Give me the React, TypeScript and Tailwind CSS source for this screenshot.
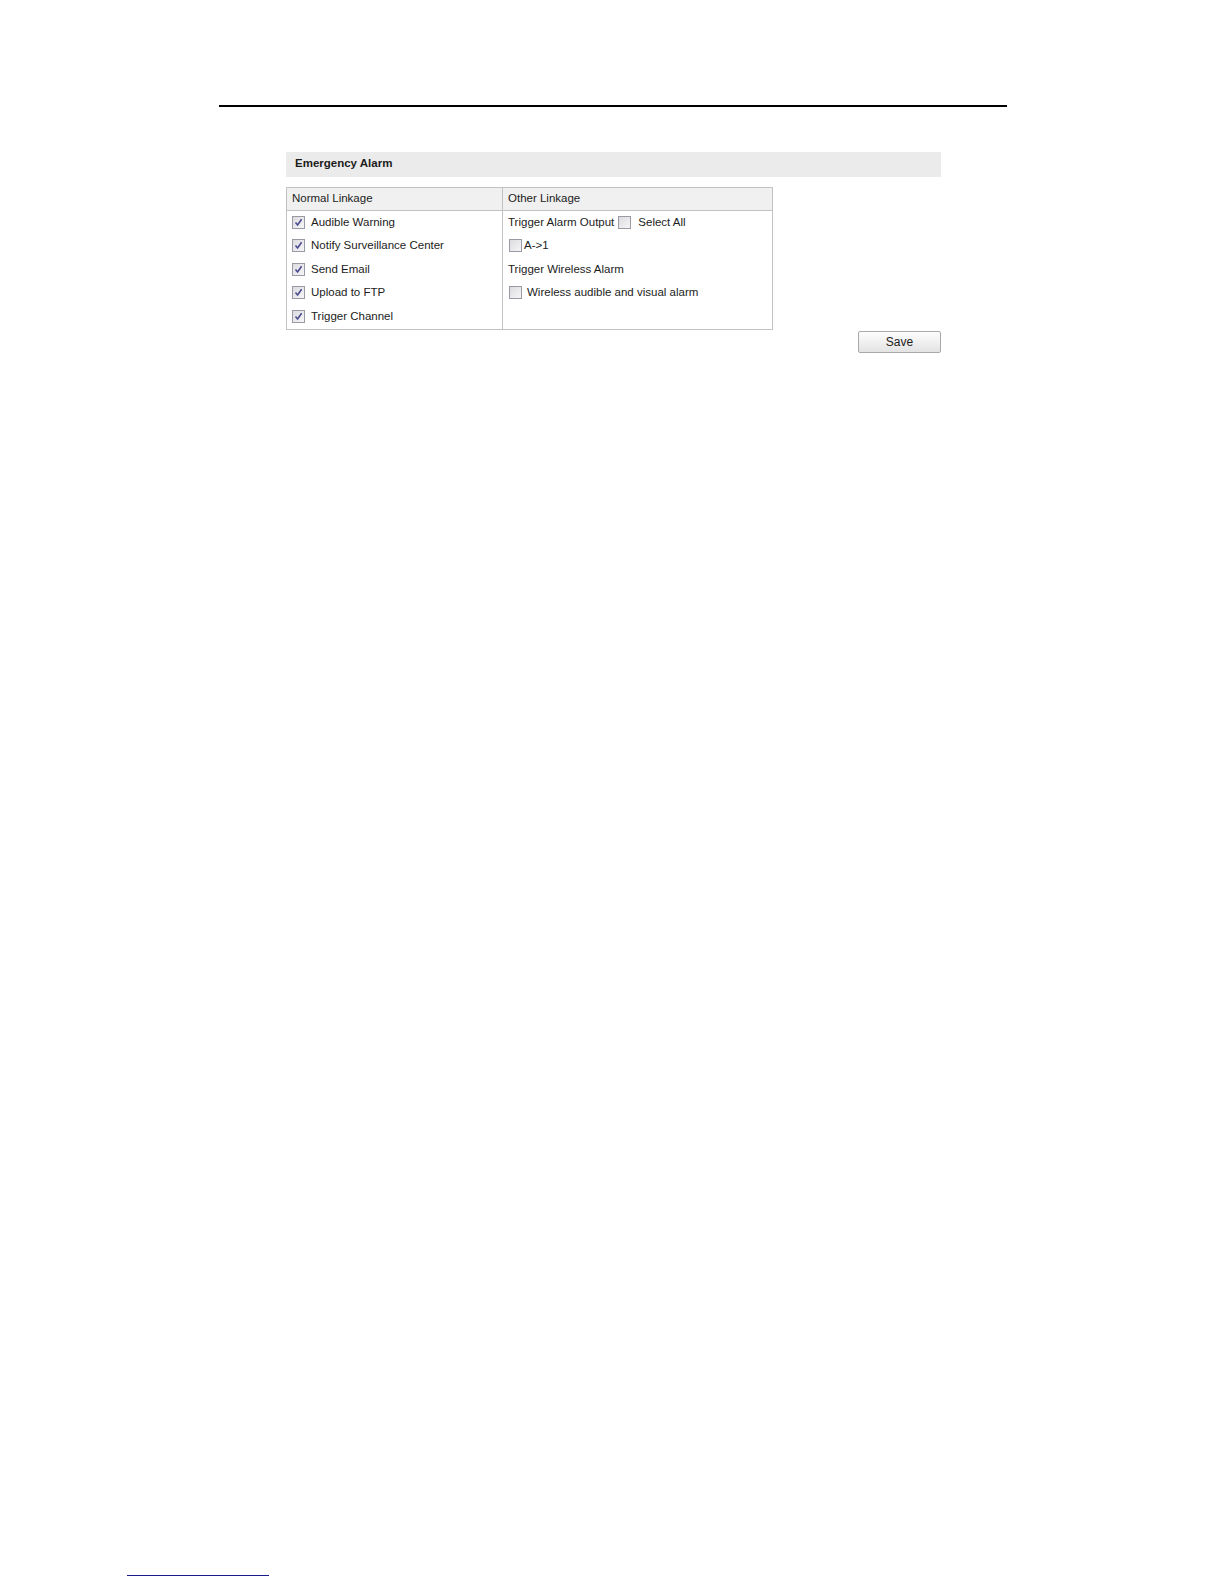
import React from "react";

function Box({ checked }: { checked?: boolean }) {
  return (
    <span className="inline-flex w-[13px] h-[13px] shrink-0 items-center justify-center border border-[#9a9aa4] bg-gradient-to-br from-[#dcdce0] to-[#f6f6f8]">
      {checked && (
        <svg width="9" height="9" viewBox="0 0 9 9">
          <path d="M1.5 4.5 L3.6 7 L7.6 1.2" fill="none" stroke="#4b4b8f" strokeWidth="1.6" />
        </svg>
      )}
    </span>
  );
}

const left = ["Audible Warning", "Notify Surveillance Center", "Send Email", "Upload to FTP", "Trigger Channel"];

export default function App() {
  return (
    <div className="w-[1224px] h-[1584px] flex flex-col bg-white text-[11.5px] text-[#1c1c1c] font-['Liberation_Sans',Arial,sans-serif]">
      <div className="mt-[105px] ml-[219px] w-[788px] h-[1.5px] bg-black" />
      <div className="ml-[286px] mt-[45px] w-[655px] flex flex-col">
        <div className="h-[25px] bg-[#ebebeb] flex items-center pl-[9px] font-bold">Emergency Alarm</div>
        <div className="mt-[10px] w-[487px] border border-[#c2c2c2] grid grid-cols-[216px_1fr]">
          <div className="h-[23px] bg-[#f0f0f0] border-b border-r border-[#c2c2c2] flex items-center pl-[5px]">Normal Linkage</div>
          <div className="h-[23px] bg-[#f0f0f0] border-b border-[#c2c2c2] flex items-center pl-[5px]">Other Linkage</div>
          <div className="border-r border-[#c2c2c2] flex flex-col pb-[1px]">
            {left.map((t) => (
              <div key={t} className="h-[23.5px] flex items-center pl-[5px] gap-[6px]">
                <Box checked />
                <span>{t}</span>
              </div>
            ))}
          </div>
          <div className="flex flex-col pb-[1px]">
            <div className="h-[23.5px] flex items-center pl-[5px]">
              <span>Trigger Alarm Output</span>
              <span className="ml-[4px] flex items-center"><Box /></span>
              <span className="ml-[7px]">Select All</span>
            </div>
            <div className="h-[23.5px] flex items-center pl-[6px] gap-[2px]">
              <Box />
              <span>A-&gt;1</span>
            </div>
            <div className="h-[23.5px] flex items-center pl-[5px]">Trigger Wireless Alarm</div>
            <div className="h-[23.5px] flex items-center pl-[6px] gap-[5px]">
              <Box />
              <span>Wireless audible and visual alarm</span>
            </div>
          </div>
        </div>
        <div className="flex justify-end mt-px">
          <button className="w-[83px] h-[22px] border border-[#a9a9a9] rounded-[2px] bg-gradient-to-b from-[#fdfdfd] to-[#e3e3e3] text-[12px] text-[#1c1c1c] flex items-center justify-center">
            Save
          </button>
        </div>
      </div>
      <div className="mt-auto mb-[8px] ml-[127px] w-[142px] h-px bg-[#1a1a8c]" />
    </div>
  );
}
